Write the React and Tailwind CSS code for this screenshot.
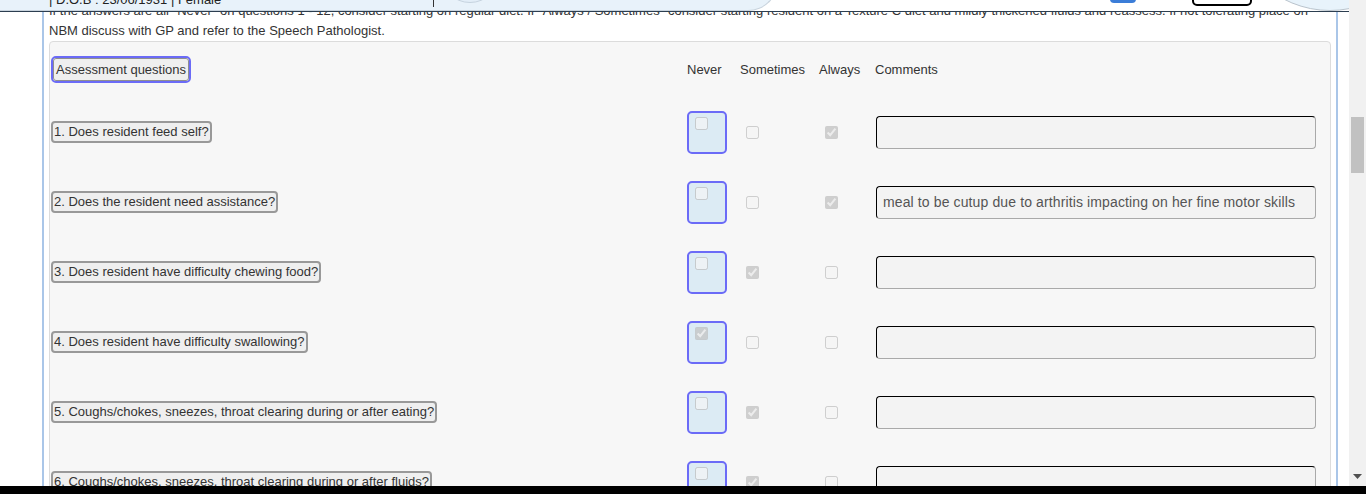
import React from 'react';

const questions = [
  { label: '1. Does resident feed self?', answer: 'always', comment: '' },
  {
    label: '2. Does the resident need assistance?',
    answer: 'always',
    comment: 'meal to be cutup due to arthritis impacting on her fine motor skills',
  },
  { label: '3. Does resident have difficulty chewing food?', answer: 'sometimes', comment: '' },
  { label: '4. Does resident have difficulty swallowing?', answer: 'never', comment: '' },
  {
    label: '5. Coughs/chokes, sneezes, throat clearing during or after eating?',
    answer: 'sometimes',
    comment: '',
  },
  {
    label: '6. Coughs/chokes, sneezes, throat clearing during or after fluids?',
    answer: 'sometimes',
    comment: '',
  },
];

const Check = ({ checked }) => (
  <input
    type="checkbox"
    checked={checked}
    disabled
    readOnly
    className="m-0 h-[13px] w-[13px] shrink-0"
  />
);

const Header = () => (
  <div className="absolute left-0 right-0 top-0 z-10 h-[12px] overflow-hidden border-b border-[#2c3e50] bg-white">
    <div className="absolute left-0 top-[-30px] h-[41px] w-[778px] rounded-br-[30px] border-b border-r border-[#c8d3dd] bg-[#e8f2fa]" />
    <div className="absolute left-[49px] top-[-8px] whitespace-nowrap text-[13px] leading-[15px] text-[#222]">
      | D.O.B : 23/06/1931 | Female
    </div>
    <div className="absolute left-[433px] top-0 h-[7px] w-px bg-[#333]" />
    <div className="absolute left-[440px] top-[-57px] h-[60px] w-[60px] rounded-full border border-[#c6d3df] bg-[#e3eef8]" />
    <div className="absolute left-[1110px] top-[-10px] h-[13px] w-[26px] rounded-[4px] bg-[#3b7dd8]" />
    <div className="absolute left-[1192px] top-[-10px] h-[16px] w-[60px] rounded-[5px] border-2 border-black bg-white" />
    <div className="absolute left-[1230px] top-[-189px] h-[200px] w-[200px] rounded-full border border-[#b9c3cc] bg-[#e8f3fb]" />
  </div>
);

const Row = ({ q }) => (
  <div className="flex h-[70px] items-center">
    <div className="w-[637px] pl-px">
      <span className="inline-block whitespace-nowrap rounded-[4px] border-2 border-[#999] bg-[#efefef] px-px leading-[18px] text-[#333]">
        {q.label}
      </span>
    </div>
    <div className="w-[53px]">
      <div className="flex h-[43px] w-[40px] items-start rounded-[5px] border-2 border-[#6b6bf7] bg-[#dcebf4] pl-[6px] pt-[4px]">
        <Check checked={q.answer === 'never'} />
      </div>
    </div>
    <div className="flex w-[79px] pl-[6px] pt-px">
      <Check checked={q.answer === 'sometimes'} />
    </div>
    <div className="flex w-[56px] pl-[6px] pt-px">
      <Check checked={q.answer === 'always'} />
    </div>
    <div className="flex-1 pl-px">
      <input
        readOnly
        value={q.comment}
        className="h-[33px] w-full rounded-[4px] border border-b-[#a9a9a9] border-l-black border-r-[#a9a9a9] border-t-black bg-[#f3f3f3] px-[6px] text-[14px] tracking-[0.12px] text-[#555] outline-none"
      />
    </div>
  </div>
);

export default function App() {
  return (
    <div className="flex h-[494px] w-[1366px] flex-col overflow-hidden bg-white font-['Liberation_Sans',Arial,sans-serif] text-[13px] text-[#333]">
      <div className="flex min-h-0 flex-1">
        <div className="relative flex-1 overflow-hidden">
          <Header />
          <div className="ml-[42px] h-full w-[1296px] border-x-2 border-[#aac6e8] px-[5px] pt-px">
            <p className="leading-[20px]">
              If the answers are all "Never" on questions 1 - 12, consider starting on regular diet. If
              "Always / Sometimes" consider starting resident on a Texture C diet and mildly thickened
              fluids and reassess. If not tolerating place on NBM discuss with GP and refer to the Speech
              Pathologist.
            </p>
            <div className="rounded-[4px] border border-[#dcdcdc] bg-[#f7f7f7] pr-[14px] pt-[14px]">
              <div className="flex h-[27px] items-center">
                <div className="w-[637px] pl-px">
                  <span className="inline-block rounded-[5px] border-2 border-[#6b6bf7]">
                    <span className="block whitespace-nowrap rounded-[3px] border border-[#8f8f8f] bg-[#efefef] px-[2px] leading-[21px]">
                      Assessment questions
                    </span>
                  </span>
                </div>
                <div className="w-[53px]">Never</div>
                <div className="w-[79px]">Sometimes</div>
                <div className="w-[56px]">Always</div>
                <div className="flex-1">Comments</div>
              </div>
              <div className="mt-[14px]">
                {questions.map((q) => (
                  <Row key={q.label} q={q} />
                ))}
              </div>
            </div>
          </div>
        </div>
        <div className="flex w-[17px] flex-col items-center bg-[#f1f1f1]">
          <div className="mt-[117px] h-[56px] w-[13px] bg-[#c1c1c1]" />
          <div className="flex-1" />
          <svg width="9" height="6" viewBox="0 0 9 6" className="mb-[6px]">
            <path d="M0 0 H9 L4.5 5 Z" fill="#505050" />
          </svg>
        </div>
      </div>
      <div className="h-[8px] bg-black" />
    </div>
  );
}
